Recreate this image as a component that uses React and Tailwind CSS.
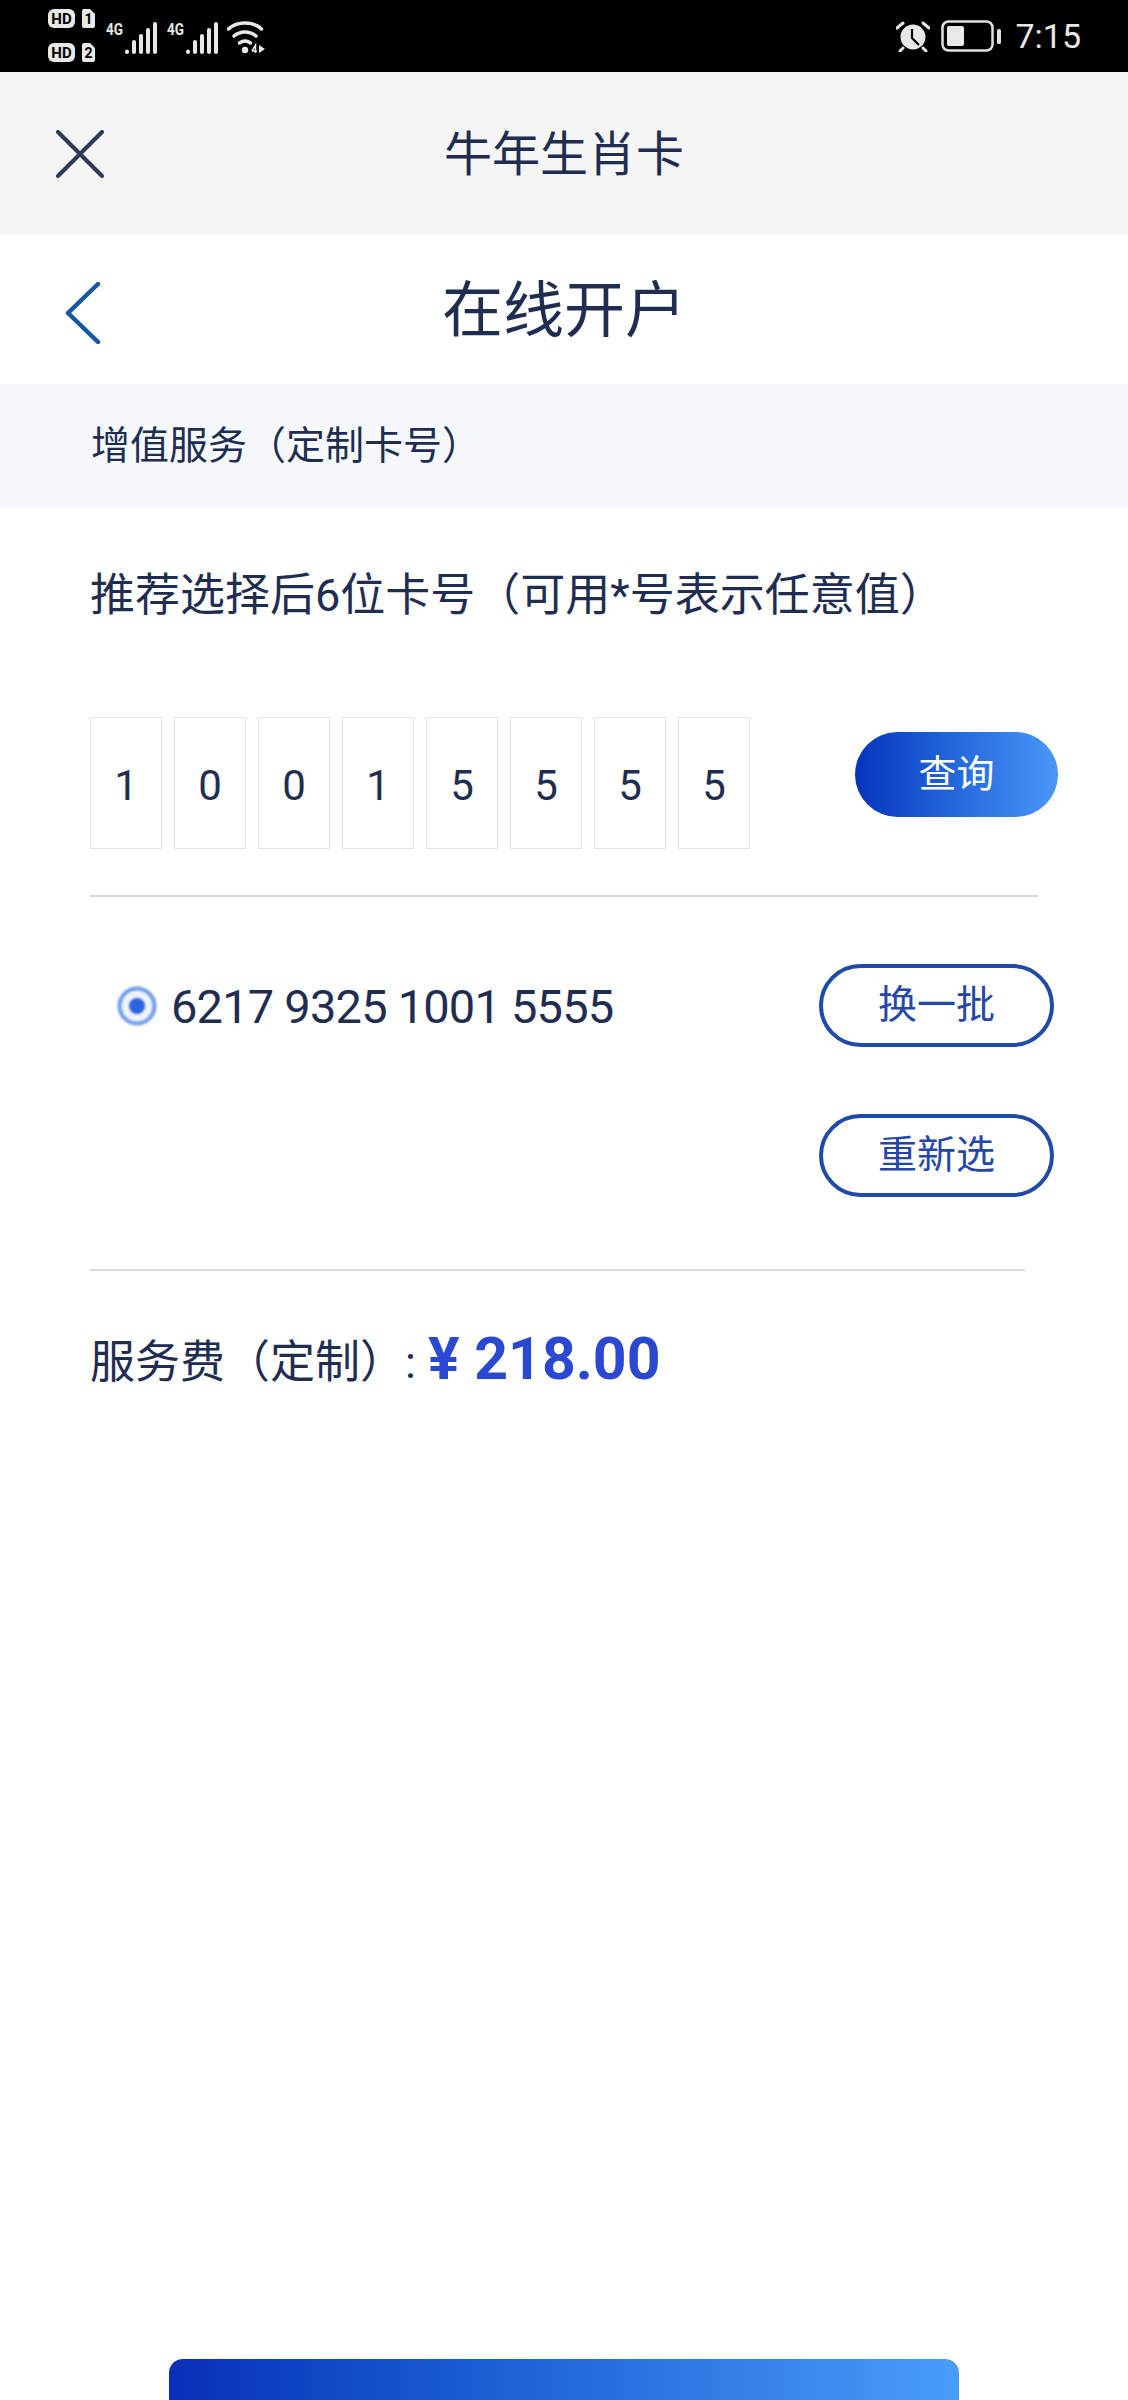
const font = { fontFamily: "Roboto, 'Noto Sans CJK SC', sans-serif" };

function SimBadges() {
  return (
    <svg width="48" height="54" viewBox="0 0 48 54" className="shrink-0 overflow-visible">
      {[0, 34].map((y, i) => (
        <g key={y}>
          <rect x="0" y={y} width="27" height="19" rx="6" fill="#e8e8e8" />
          <text x="13.5" y={y + 15} textAnchor="middle" fontSize="15" fontWeight="700" fill="#000" fontFamily="Roboto">
            HD
          </text>
          <path d={`M34 ${y + 2}a2 2 0 0 1 2-2h6l5 5v12a2 2 0 0 1-2 2H36a2 2 0 0 1-2-2z`} fill="#e8e8e8" />
          <text x="40.5" y={y + 15} textAnchor="middle" fontSize="14" fontWeight="700" fill="#000" fontFamily="Roboto">
            {i + 1}
          </text>
        </g>
      ))}
    </svg>
  );
}

function Signal() {
  return (
    <svg width="51" height="36" viewBox="0 0 51 36" className="shrink-0 overflow-visible">
      <text x="0" y="17" fontSize="17" fontWeight="700" fill="#e8e8e8" fontFamily="Roboto" textLength="17" lengthAdjust="spacingAndGlyphs">
        4G
      </text>
      <g stroke="#e8e8e8" strokeWidth="4" strokeLinecap="round">
        <path d="M21 33.5v.5" />
        <path d="M28 24v10" />
        <path d="M35 18v16" />
        <path d="M42 12v22" />
        <path d="M49 6v28" />
      </g>
    </svg>
  );
}

function Wifi() {
  return (
    <svg width="38" height="34" viewBox="0 0 38 34" className="shrink-0">
      <g fill="none" stroke="#e8e8e8" strokeWidth="3.5" strokeLinecap="round">
        <path d="M1.5 9C10 1 26 1 34.5 9" />
        <path d="M7 16c6-5.5 16-5.500 22 0" />
        <path d="M12.5 23c3.500-2.500 7.500-2.500 11 0" />
      </g>
      <circle cx="18" cy="30" r="3.200" fill="#e8e8e8" />
      <path d="M25 31l3.500-6v8M25 31h5" fill="none" stroke="#e8e8e8" strokeWidth="1.500" />
      <path d="M32 25l6 4-6 4z" fill="#e8e8e8" />
    </svg>
  );
}

function Alarm() {
  return (
    <svg width="34" height="31" viewBox="0 0 34 31" className="shrink-0">
      <circle cx="17" cy="16" r="12.500" fill="#e8e8e8" />
      <path d="M16 8v9l7 7" fill="none" stroke="#000" strokeWidth="2.200" />
      <path d="M1 7l6-5M33 7l-6-5M7 27l-3 3M27 27l3 3" stroke="#e8e8e8" strokeWidth="3" strokeLinecap="round" />
    </svg>
  );
}

function Battery() {
  return (
    <svg width="60" height="32" viewBox="0 0 60 32" className="shrink-0">
      <rect x="1.500" y="1.500" width="50" height="29" rx="6" fill="none" stroke="#e0e0e0" strokeWidth="2.500" />
      <rect x="6" y="6" width="17" height="20" rx="2" fill="#e8e8e8" />
      <rect x="56" y="9" width="4" height="15" rx="1.500" fill="#e0e0e0" />
    </svg>
  );
}

function Radio() {
  return (
    <svg width="42" height="42" viewBox="0 0 42 42" className="shrink-0 blur-[1px]">
      <circle cx="21" cy="21" r="17.500" fill="#eef3fd" stroke="#6f9cec" strokeWidth="4" />
      <circle cx="21" cy="21" r="8" fill="#2a63dc" />
    </svg>
  );
}

const OutlineButton = ({ text }) => (
  <button className="w-[235px] h-[83px] rounded-full border-4 border-[#1f4aa8] text-[39px] leading-none text-[#2447a8] flex items-center justify-center">
    {text}
  </button>
);

export default function App() {
  const digits = ["1", "0", "0", "1", "5", "5", "5", "5"];

  return (
    <div className="w-[1128px] h-[2400px] bg-white flex flex-col overflow-hidden text-[#1f2d50]" style={font}>
      <div className="h-[72px] shrink-0 bg-black flex items-center justify-between pl-[48px] pr-[47px]">
        <div className="flex items-center">
          <SimBadges />
          <div className="ml-[10px] flex items-center">
            <Signal />
          </div>
          <div className="ml-[10px] flex items-center">
            <Signal />
          </div>
          <div className="ml-[9px] flex items-center mt-[2px]">
            <Wifi />
          </div>
        </div>
        <div className="flex items-center">
          <Alarm />
          <div className="ml-[11px]">
            <Battery />
          </div>
          <span className="ml-[14px] text-[34px] leading-none text-[#e8e8e8]">7:15</span>
        </div>
      </div>

      <div className="h-[162px] shrink-0 bg-[#f5f5f5] grid grid-cols-[1fr_auto_1fr] items-center pl-[56px]">
        <svg width="48" height="48" viewBox="0 0 48 48" className="mt-[1px]">
          <path d="M2 2l44 44M46 2L2 46" stroke="#2c3a58" strokeWidth="4" strokeLinecap="round" />
        </svg>
        <h1 className="text-[48px] leading-none font-normal -ml-[56px] mt-[3px]">牛年生肖卡</h1>
        <span />
      </div>

      <div className="h-[150px] shrink-0 grid grid-cols-[1fr_auto_1fr] items-center pl-[65px]">
        <svg width="36" height="62" viewBox="0 0 36 62" className="mt-[8px]">
          <path d="M33 2L3 31l30 29" fill="none" stroke="#14589f" strokeWidth="4.500" strokeLinecap="round" strokeLinejoin="round" />
        </svg>
        <h2 className="text-[61px] leading-none font-normal -ml-[65px] mt-[4px]">在线开户</h2>
        <span />
      </div>

      <div className="h-[124px] shrink-0 bg-[#f5f9fd] flex items-center pl-[91px] text-[39px] leading-none">
        增值服务（定制卡号）
      </div>

      <div className="pl-[90px] flex flex-col">
        <p className="mt-[62px] text-[45px] leading-[52px]">推荐选择后6位卡号（可用*号表示任意值）</p>

        <div className="mt-[95px] flex items-center">
          <div className="flex gap-[12px]">
            {digits.map((d, i) => (
              <div
                key={i}
                className="w-[72px] h-[132px] border-[1.5px] border-[#e4e4e4] flex items-center justify-center pt-[5px] text-[42px] leading-none"
              >
                {d}
              </div>
            ))}
          </div>
          <button className="ml-[105px] -mt-[18px] w-[203px] h-[85px] rounded-full bg-gradient-to-r from-[#0a33bd] to-[#4a97f8] text-white text-[38px] leading-none flex items-center justify-center">
            查询
          </button>
        </div>

        <div className="mt-[46px] w-[948px] h-[2px] bg-[#d8dadc]" />

        <div className="mt-[67px] w-[964px] flex items-center justify-between">
          <div className="flex items-center pl-[26px]">
            <Radio />
            <span className="ml-[13px] mt-[2px] text-[47px] leading-none tracking-[-0.8px]">6217 9325 1001 5555</span>
          </div>
          <OutlineButton text="换一批" />
        </div>

        <div className="mt-[67px] w-[964px] flex justify-end">
          <OutlineButton text="重新选" />
        </div>

        <div className="mt-[72px] w-[935px] h-[2px] bg-[#d8dadc]" />

        <div className="mt-[58px] flex items-start">
          <span className="mt-[4px] text-[45px] leading-[60px]">服务费（定制）:</span>
          <span className="ml-[12px] text-[59px] leading-[60px] font-bold text-[#2b48d0]">¥ 218.00</span>
        </div>
      </div>

      <div className="mt-auto mx-auto w-[790px] h-[41px] rounded-t-[14px] bg-gradient-to-r from-[#0a2fb8] to-[#4a9dfa]" />
    </div>
  );
}
